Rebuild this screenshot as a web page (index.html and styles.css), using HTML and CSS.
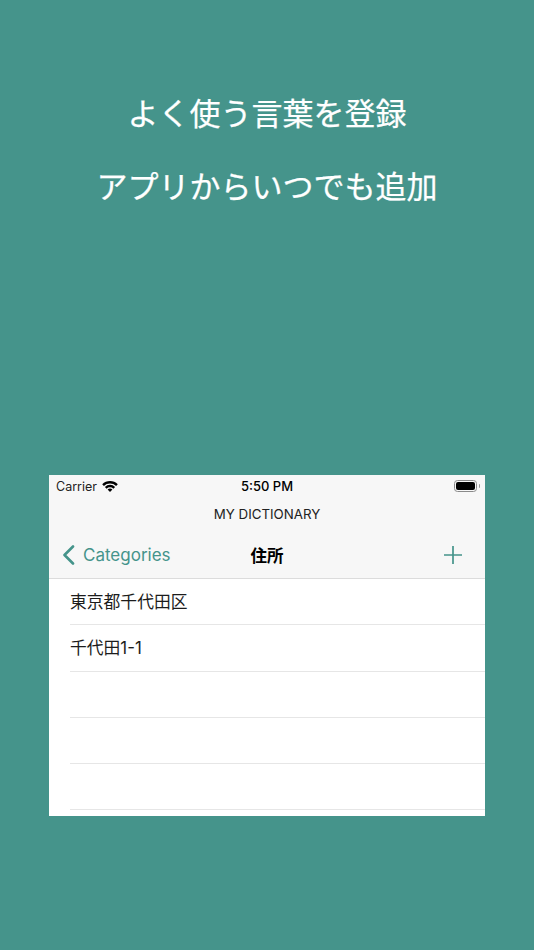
FILE: index.html
```html
<!DOCTYPE html>
<html lang="ja">
<head>
<meta charset="utf-8">
<title>My Dictionary</title>
<link rel="stylesheet" href="styles.css">
</head>
<body>
<main class="page">
  <header class="headline">
    <h1>よく使う言葉を登録</h1>
    <h1>アプリからいつでも追加</h1>
  </header>
  <section class="phone">
    <div class="bars">
      <div class="status">
        <div class="status-left">
          <span>Carrier</span>
          <svg class="wifi" viewBox="0 0 16 12" width="16" height="12">
            <path d="M0.2 4.2A11.2 11.2 0 0 1 15.8 4.2L14.1 6A8.8 8.8 0 0 0 1.9 6Z"/>
            <path d="M2.9 6.9A7.3 7.3 0 0 1 13.1 6.9L11.4 8.7A4.9 4.9 0 0 0 4.6 8.7Z"/>
            <path d="M5.6 9.6A3.4 3.4 0 0 1 10.4 9.6L8 12Z"/>
          </svg>
        </div>
        <span class="time">5:50 PM</span>
        <div class="battery"><span class="battery-body"><span class="battery-fill"></span></span><span class="battery-cap"></span></div>
      </div>
      <div class="app-title">MY DICTIONARY</div>
      <nav class="nav">
        <div class="back">
          <svg class="chevron" viewBox="0 0 13 20" width="13" height="20"><path d="M11 1.5L2.5 10L11 18.5"/></svg>
          <span>Categories</span>
        </div>
        <div class="nav-title">住所</div>
        <svg class="plus" viewBox="0 0 18 18" width="18" height="18"><path d="M9 0V18M0 9H18"/></svg>
      </nav>
    </div>
    <ul class="list">
      <li>東京都千代田区</li>
      <li>千代田1-1</li>
      <li></li>
      <li></li>
      <li></li>
    </ul>
  </section>
</main>
</body>
</html>
```

FILE: styles.css
```css
* { box-sizing: border-box; }
html, body { margin: 0; padding: 0; }
body {
  width: 534px;
  height: 950px;
  overflow: hidden;
  background: #45948b;
  font-family: "Inter", "Noto Sans CJK JP", sans-serif;
}
.page {
  display: flex;
  flex-direction: column;
  align-items: center;
  height: 950px;
}
.headline {
  display: flex;
  flex-direction: column;
  gap: 29px;
  padding-top: 90px;
  height: 475px;
  flex-shrink: 0;
}
.headline h1 {
  margin: 0;
  height: 44px;
  line-height: 44px;
  font-family: "Noto Sans CJK JP", sans-serif;
  font-size: 31px;
  font-weight: 400;
  -webkit-text-stroke: 0.25px #fff;
  color: #fff;
  text-align: center;
  white-space: nowrap;
}
.phone {
  width: 436px;
  height: 340.5px;
  background: #fff;
  overflow: hidden;
}
.bars {
  height: 104px;
  background: #f7f7f7;
  border-bottom: 1px solid #dcdcdc;
}
.status {
  position: relative;
  display: flex;
  align-items: center;
  justify-content: space-between;
  height: 22px;
  padding: 0 5px 0 7px;
  font-size: 12.5px;
  color: #222;
}
.status-left { display: flex; align-items: center; gap: 5px; }
.wifi { fill: #000; }
.time {
  position: absolute;
  left: 0;
  right: 0;
  text-align: center;
  font-weight: 500;
  font-size: 13px;
  color: #000;
}
.battery { display: flex; align-items: center; }
.battery-body {
  display: block;
  width: 23px;
  height: 12px;
  padding: 1px;
  border: 1px solid #8a8a8a;
  border-radius: 3.5px;
}
.battery-fill { display: block; height: 100%; background: #000; border-radius: 2px; }
.battery-cap {
  display: block;
  width: 1.5px;
  height: 4px;
  margin-left: 1.5px;
  background: #9a9a9a;
  border-radius: 0 1px 1px 0;
}
.app-title {
  height: 36px;
  line-height: 35px;
  text-align: center;
  font-size: 13.3px;
  color: #222;
}
.nav {
  position: relative;
  display: flex;
  align-items: center;
  justify-content: space-between;
  height: 45px;
  padding: 0 23px 1px 13px;
}
.back { display: flex; align-items: center; gap: 8px; color: #45948b; font-size: 17px; }
.chevron { fill: none; stroke: #45948b; stroke-width: 2.6; stroke-linecap: round; stroke-linejoin: round; }
.nav-title {
  position: absolute;
  left: 0;
  right: 0;
  padding-bottom: 1px;
  text-align: center;
  font-family: "Noto Sans CJK JP", sans-serif;
  font-size: 16.5px;
  font-weight: 700;
  color: #000;
}
.plus { fill: none; stroke: #45948b; stroke-width: 1.7; }
.list { list-style: none; margin: 0; padding: 0 0 0 21px; }
.list li {
  height: 46.25px;
  line-height: 46px;
  border-bottom: 1px solid #e6e6e6;
  font-family: "Inter", "Noto Sans CJK JP", sans-serif;
  font-size: 16.8px;
  color: #1c1c1c;
}
```
